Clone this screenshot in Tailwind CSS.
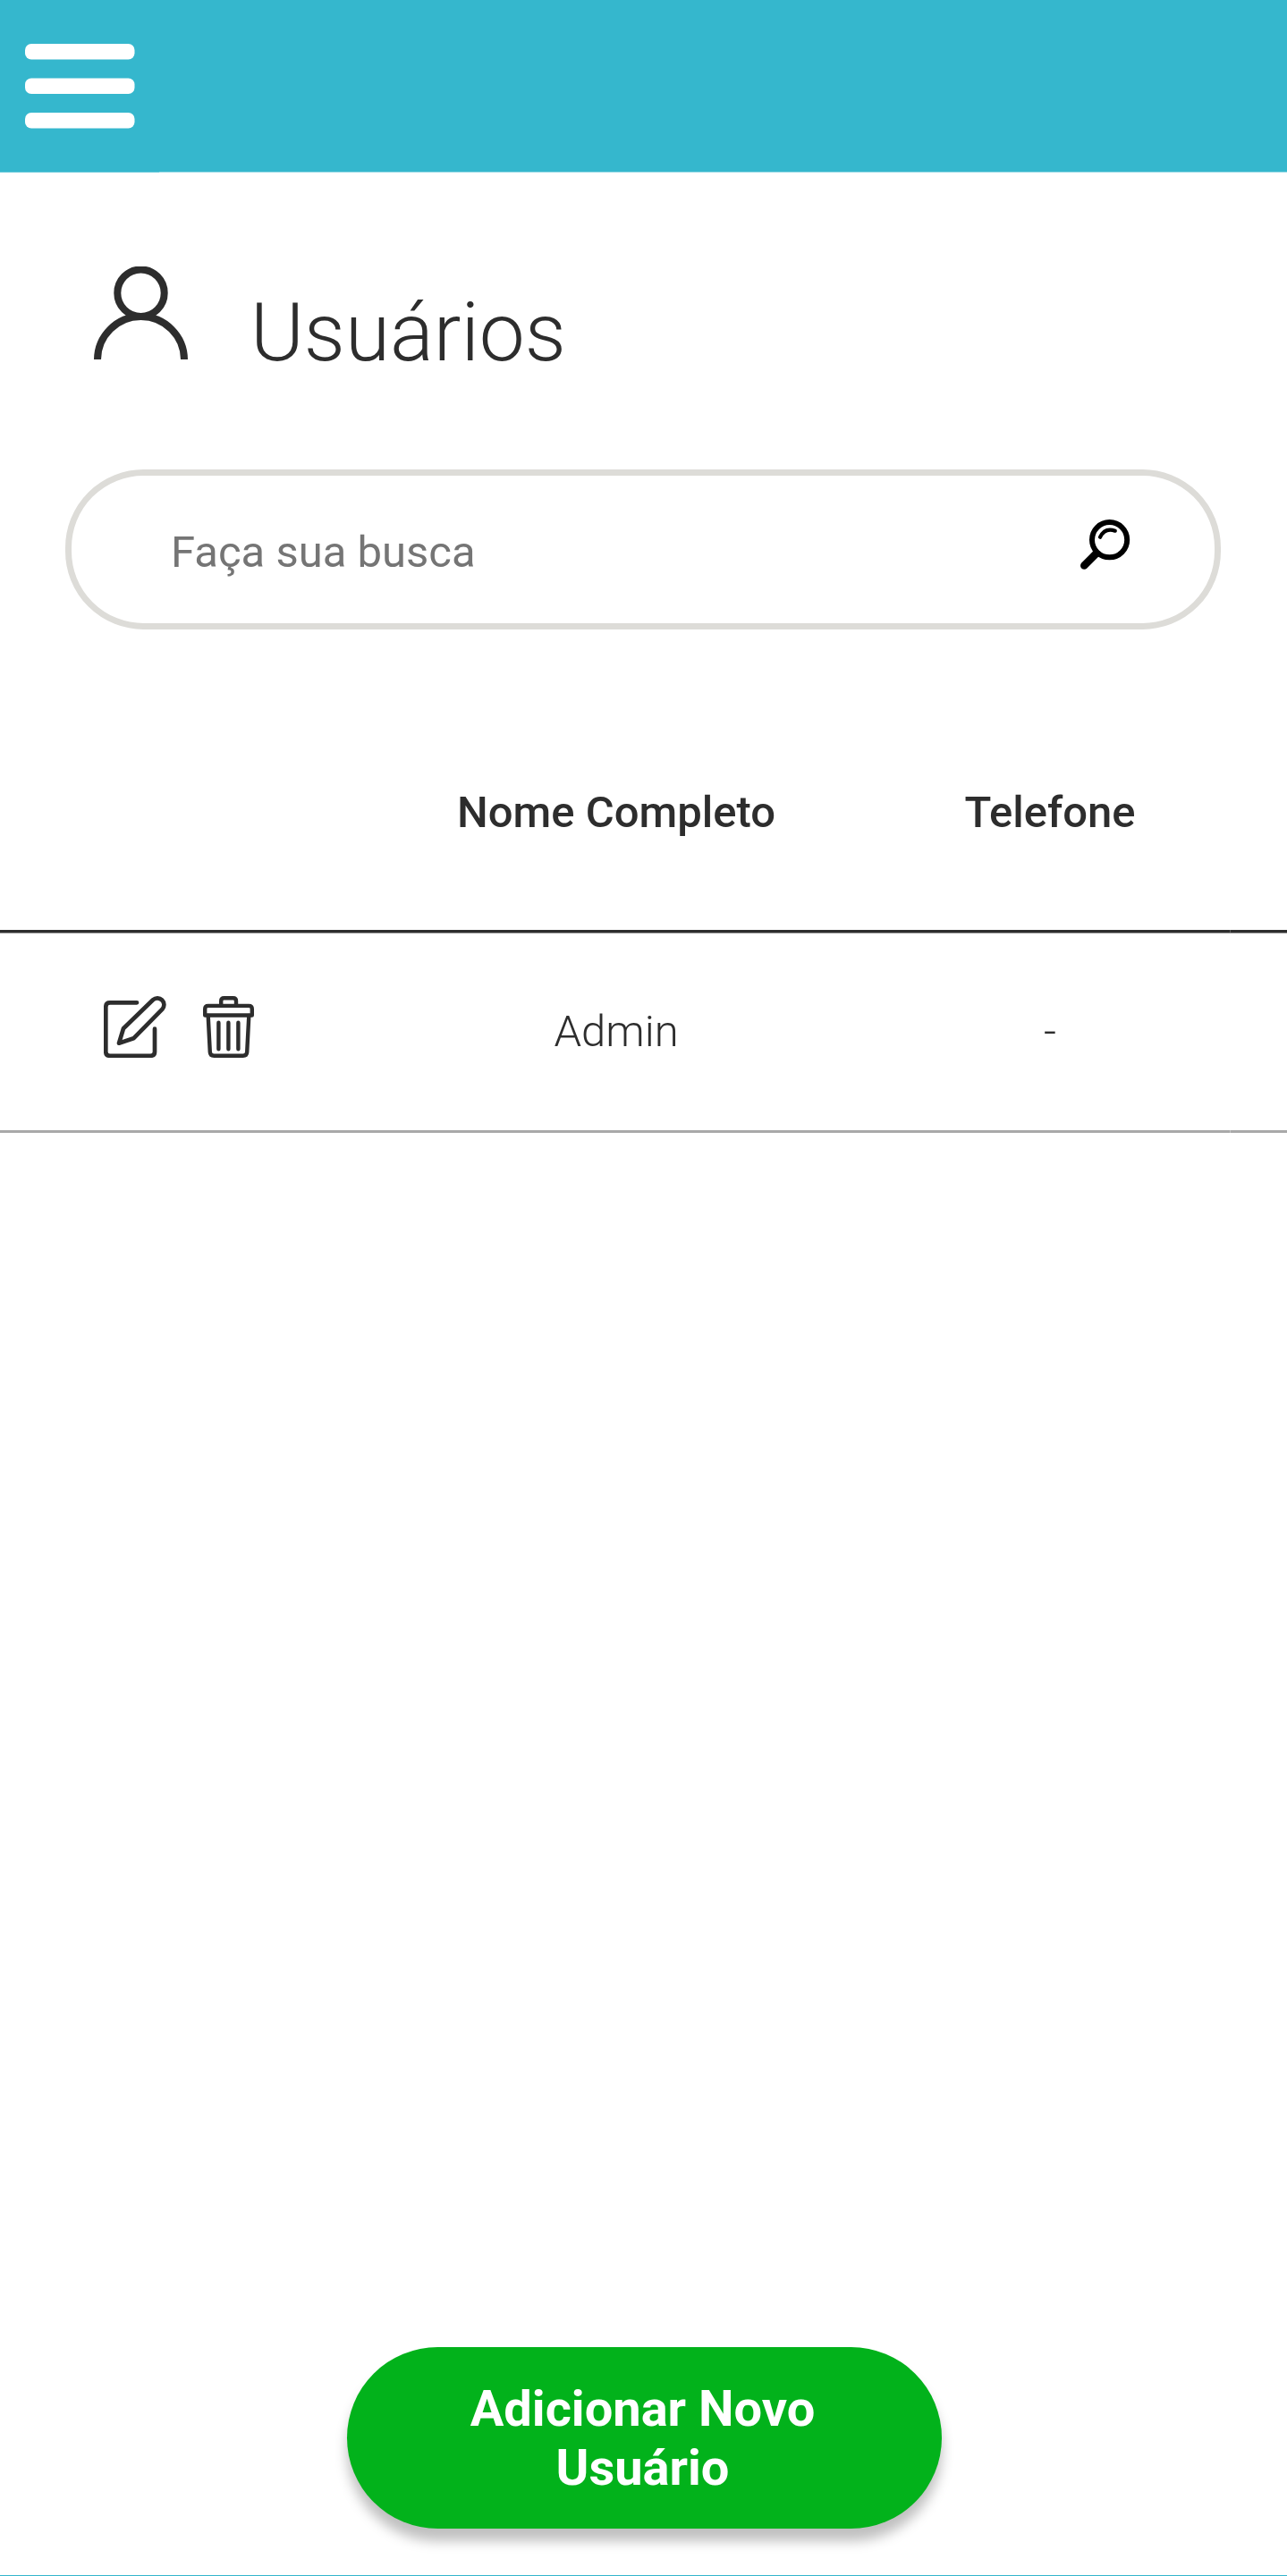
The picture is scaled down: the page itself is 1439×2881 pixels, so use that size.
<!DOCTYPE html>
<html lang="pt-BR">
<head>
<meta charset="utf-8">
<title>Usuários</title>
<script src="https://cdn.jsdelivr.net/npm/@tailwindcss/browser@4"></script>
</head>
<body class="bg-white font-['Roboto',sans-serif] text-[#2d2d2d]">
<div class="flex h-[2881px] w-[1439px] flex-col overflow-hidden">
  <header class="flex h-[192px] shrink-0 items-center bg-[#35b7cd] pl-7">
    <button aria-label="Menu" class="block">
      <svg class="block h-24 w-[123px]" viewBox="0 0 123 96" fill="#fff">
        <rect x="0" y="1" width="122.5" height="17.5" rx="7"/>
        <rect x="0" y="39.5" width="122.5" height="17.5" rx="7"/>
        <rect x="0" y="78" width="122.5" height="17.5" rx="7"/>
      </svg>
    </button>
  </header>
  <div class="flex h-px shrink-0 bg-[#9adbe6]"><div class="w-[178px] bg-[#68c9da]"></div></div>

  <main class="flex grow flex-col">
    <div class="flex h-[332px] shrink-0 pl-[105px] pt-[105px]">
      <svg class="h-[104px] w-[105px] shrink-0" viewBox="0 0 105 104" fill="none" stroke="#2d2d2d" stroke-width="8">
        <circle cx="52.5" cy="29.7" r="26.2"/>
        <path d="M4 104.500A48.500 48.500 0 0 1 101 104.500"/>
      </svg>
      <h1 class="ml-[70px] mt-[21px] text-[91px] leading-[107px] font-light">Usuários</h1>
    </div>

    <label class="mr-[74px] ml-[73px] flex h-[178.5px] shrink-0 rounded-[87.5px] border-[7px] border-[#dddcd8] pl-[111px]">
      <input type="text" placeholder="Faça sua busca" class="mt-[57px] h-[58px] w-[1017px] text-[49px] placeholder:text-[#757575] outline-none">
      <svg class="mt-[48.500px] h-[57px] w-[56px] shrink-0" viewBox="0 0 56 57" fill="none" stroke="#000" stroke-linecap="round">
        <circle cx="32.600" cy="22.700" r="19.600" stroke-width="6"/>
        <path d="M4.300 51.500L17.500 38.300" stroke-width="8.600"/>
        <path d="M22 19.700Q27.500 8.500 38.800 12.700" stroke-width="4.200"/>
      </svg>
    </label>

    <div class="mt-[136.500px] grid h-[200px] shrink-0 grid-cols-[406px_566px_404px_63px] text-center text-[49px] leading-[57px] font-medium">
      <div></div>
      <div class="pt-[40px]">Nome Completo</div>
      <div class="pt-[40px]">Telefone</div>
      <div></div>
    </div>
    <div class="flex h-[3px] shrink-0">
      <div class="w-[1375px] bg-[#2d2d2d]"></div>
      <div class="w-px bg-[#5e5e5e]"></div>
      <div class="grow bg-[#2d2d2d]"></div>
    </div>
    <div class="h-px shrink-0 bg-[#969696]"></div>
    <div class="grid h-[220px] shrink-0 grid-cols-[406px_566px_404px_63px] text-center text-[49px] leading-[57px] font-light">
      <div class="flex gap-[41px] pt-[70px] pl-[116px]">
        <svg class="h-[69px] w-[70px]" viewBox="0 0 70 69" fill="none" stroke="#2d2d2d" stroke-width="4.700" stroke-linecap="round" stroke-linejoin="round">
          <path d="M37 7.300H7Q2.300 7.300 2.300 12.100V62.400Q2.300 66.800 7 66.800H52.200Q57 66.800 57 62.400V36.700"/>
          <path d="M17 52.700L22 36.300L55 4.300A7.400 7.400 0 0 1 65.500 14.700L33.300 47.300Z"/>
        </svg>
        <svg class="h-[69px] w-[57px]" viewBox="0 0 57 69" fill="none" stroke="#2d2d2d" stroke-width="4.400" stroke-linecap="round" stroke-linejoin="round">
          <path d="M20.200 10V5.500Q20.200 2.200 23.500 2.200H33.700Q37 2.200 37 5.500V10"/>
          <path d="M2.200 21.500V14.500Q2.200 10.900 5.800 10.900H51.200Q54.800 10.900 54.800 14.500V21.500Z"/>
          <path d="M5.700 22L7.800 62.700Q8 66.800 12.300 66.800H44.700Q49 66.800 49.200 62.700L51.300 22"/>
          <path d="M17.400 29.800V59.200M28.400 29.800V59.200M39.400 29.800V59.200"/>
        </svg>
      </div>
      <div class="pt-[81px]">Admin</div>
      <div class="pt-[81px]">-</div>
      <div></div>
    </div>
    <div class="flex h-[3px] shrink-0">
      <div class="w-[1375px] bg-[#a9a9a9]"></div>
      <div class="w-px bg-[#c4c4c4]"></div>
      <div class="grow bg-[#a9a9a9]"></div>
    </div>

    <button class="mt-auto mb-[52px] ml-[388px] h-[203px] w-[665px] shrink-0 rounded-full bg-[#02b21b] pr-[4px] text-[56px] leading-[66px] font-bold text-white shadow-[0_14px_14px_rgba(0,0,0,0.25)]">Adicionar Novo<br>Usuário</button>
  </main>
  <div class="h-px shrink-0 bg-[#35b7cd]"></div>
</div>
</body>
</html>
